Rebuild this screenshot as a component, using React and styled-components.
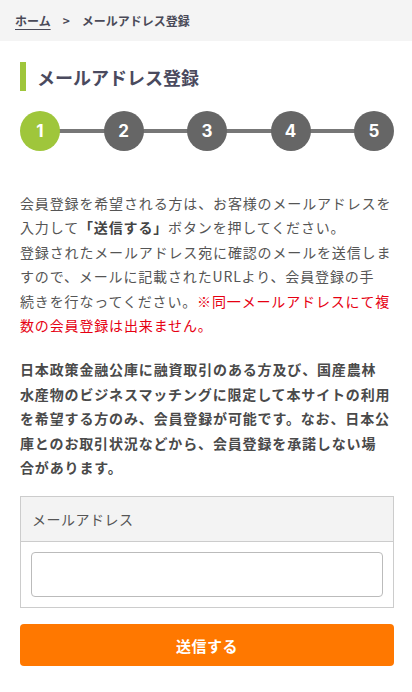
import React from "react";
import styled, { createGlobalStyle } from "styled-components";

const Global = createGlobalStyle`
  html, body { margin: 0; padding: 0; background: #fff; }
  body {
    font-family: "Noto Sans CJK JP", "Noto Sans", sans-serif;
    color: #555;
    -webkit-font-smoothing: antialiased;
  }
  * { box-sizing: border-box; }
`;

const Breadcrumb = styled.nav`
  background: #f4f4f4;
  height: 41px;
  display: flex;
  align-items: center;
  padding: 0 15px;
  font-size: 12px;
  font-weight: 700;
  color: #4a4a58;
  gap: 12px;
`;

const Crumb = styled.a`
  color: #4a4a58;
  text-decoration: underline;
  text-underline-offset: 3px;
`;

const Main = styled.main`
  padding: 21px 18px 28px 20px;
`;

const Title = styled.h1`
  margin: 0;
  border-left: 6px solid #9fc63b;
  padding-left: 11px;
  height: 29px;
  display: flex;
  align-items: center;
  font-size: 18px;
  font-weight: 700;
  color: #4a4a5e;
  letter-spacing: 0;
`;

const Steps = styled.ol`
  list-style: none;
  margin: 20px 0 0;
  padding: 0;
  display: flex;
  align-items: center;
  justify-content: space-between;
  position: relative;
  height: 40px;
  &::before {
    content: "";
    position: absolute;
    left: 20px;
    right: 20px;
    top: 18px;
    height: 4px;
    background: #777;
  }
`;

const Step = styled.li`
  position: relative;
  width: 40px;
  height: 40px;
  border-radius: 50%;
  background: ${(p) => (p.$active ? "#9fc63b" : "#666")};
  color: #fff;
  font-family: "Inter", "Noto Sans", sans-serif;
  font-weight: 700;
  font-size: 17px;
  display: flex;
  align-items: center;
  justify-content: center;
`;

const Para = styled.p`
  margin: 40px 0 0;
  font-size: 14px;
  line-height: 24.4px;
  letter-spacing: 0.85px;
  white-space: nowrap;
  color: ${(p) => (p.$strong ? "#4a4a4a" : "#555")};
  font-weight: ${(p) => (p.$strong ? 700 : 400)};
  & + & { margin-top: 20px; }
`;

const Em = styled.strong`
  font-weight: 700;
  color: #444;
`;

const Warn = styled.span`
  color: #e60012;
`;

const FormTable = styled.div`
  margin-top: 17px;
  border: 1px solid #ccc;
`;

const FormHead = styled.div`
  background: #f3f3f3;
  border-bottom: 1px solid #ccc;
  height: 45px;
  display: flex;
  align-items: center;
  padding: 0 11px;
  font-size: 14px;
  color: #555;
  letter-spacing: 0.5px;
`;

const FormBody = styled.div`
  padding: 10px;
`;

const Input = styled.input`
  display: block;
  width: 100%;
  height: 45px;
  border: 1px solid #bbb;
  border-radius: 4px;
  font-size: 15px;
  padding: 0 10px;
  outline: none;
`;

const Submit = styled.button`
  margin-top: 16px;
  width: 100%;
  height: 42px;
  border: none;
  border-radius: 4px;
  background: #ff7800;
  color: #fff;
  font-family: "Noto Sans CJK JP", sans-serif;
  font-size: 15px;
  font-weight: 700;
  letter-spacing: 0.5px;
  cursor: pointer;
`;

export default function App() {
  return (
    <>
      <Global />
      <Breadcrumb>
        <Crumb href="#">ホーム</Crumb>
        <span>&gt;</span>
        <span>メールアドレス登録</span>
      </Breadcrumb>
      <Main>
        <Title>メールアドレス登録</Title>
        <Steps>
          {[1, 2, 3, 4, 5].map((n) => (
            <Step key={n} $active={n === 1}>{n}</Step>
          ))}
        </Steps>
        <Para>
          会員登録を希望される方は、お客様のメールアドレスを<br />
          入力して<Em>「送信する」</Em>ボタンを押してください。<br />
          登録されたメールアドレス宛に確認のメールを送信しま<br />
          すので、メールに記載されたURLより、会員登録の手<br />
          続きを行なってください。<Warn>※同一メールアドレスにて複<br />
          数の会員登録は出来ません。</Warn>
        </Para>
        <Para $strong>
          日本政策金融公庫に融資取引のある方及び、国産農林<br />
          水産物のビジネスマッチングに限定して本サイトの利用<br />
          を希望する方のみ、会員登録が可能です。なお、日本公<br />
          庫とのお取引状況などから、会員登録を承諾しない場<br />
          合があります。
        </Para>
        <FormTable>
          <FormHead>メールアドレス</FormHead>
          <FormBody>
            <Input type="email" />
          </FormBody>
        </FormTable>
        <Submit type="button">送信する</Submit>
      </Main>
    </>
  );
}
